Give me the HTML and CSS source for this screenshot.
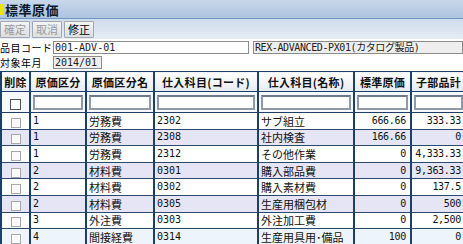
FILE: index.html
```html
<!DOCTYPE html>
<html lang="ja">
<head>
<meta charset="utf-8">
<link rel="stylesheet" href="styles.css">
</head>
<body>
<div class="titlebar"><span class="mark"></span><span class="title">標準原価</span></div>
<div class="toolbar">
  <button class="btn disabled">確定</button>
  <button class="btn disabled">取消</button>
  <button class="btn">修正</button>
</div>
<div class="form">
  <div class="frow">
    <span class="label">品目コード</span>
    <span class="field code">001-ADV-01</span>
    <span class="field name ro">REX-ADVANCED-PX01(カタログ製品)</span>
  </div>
  <div class="frow">
    <span class="label">対象年月</span>
    <span class="field ym ro">2014/01</span>
  </div>
</div>
<table class="grid">
  <colgroup>
    <col class="c1"><col class="c2"><col class="c3"><col class="c4"><col class="c5"><col class="c6"><col class="c7">
  </colgroup>
  <thead>
    <tr class="head">
      <th>削除</th><th>原価区分</th><th>原価区分名</th><th>仕入科目(コード)</th><th>仕入科目(名称)</th><th>標準原価</th><th>子部品計</th>
    </tr>
    <tr class="filter">
      <td class="chk"><span class="box dark"></span></td>
      <td><span class="fin"></span></td>
      <td><span class="fin"></span></td>
      <td><span class="fin"></span></td>
      <td><span class="fin"></span></td>
      <td><span class="fin"></span></td>
      <td><span class="fin"></span></td>
    </tr>
  </thead>
  <tbody>
    <tr><td class="chk"><span class="box"></span></td><td>1</td><td>労務費</td><td>2302</td><td>サブ組立</td><td class="num">666.66</td><td class="num">333.33</td></tr>
    <tr class="alt"><td class="chk"><span class="box"></span></td><td>1</td><td>労務費</td><td>2308</td><td>社内検査</td><td class="num">166.66</td><td class="num">0</td></tr>
    <tr><td class="chk"><span class="box"></span></td><td>1</td><td>労務費</td><td>2312</td><td>その他作業</td><td class="num">0</td><td class="num">4,333.33</td></tr>
    <tr class="alt"><td class="chk"><span class="box"></span></td><td>2</td><td>材料費</td><td>0301</td><td>購入部品費</td><td class="num">0</td><td class="num">9,363.33</td></tr>
    <tr><td class="chk"><span class="box"></span></td><td>2</td><td>材料費</td><td>0302</td><td>購入素材費</td><td class="num">0</td><td class="num">137.5</td></tr>
    <tr class="alt"><td class="chk"><span class="box"></span></td><td>2</td><td>材料費</td><td>0305</td><td>生産用梱包材</td><td class="num">0</td><td class="num">500</td></tr>
    <tr><td class="chk"><span class="box"></span></td><td>3</td><td>外注費</td><td>0303</td><td>外注加工費</td><td class="num">0</td><td class="num">2,500</td></tr>
    <tr class="hover"><td class="chk"><span class="box"></span></td><td>4</td><td>間接経費</td><td>0314</td><td>生産用具用･備品</td><td class="num">100</td><td class="num">0</td></tr>
  </tbody>
</table>
</body>
</html>
```
FILE: styles.css
```css
html, body {
  margin: 0;
  padding: 0;
  background: #ffffff;
  font-family: "Noto Sans CJK JP", "DejaVu Sans", sans-serif;
  font-size: 11px;
  color: #000;
  overflow: hidden;
}

.titlebar {
  height: 18px;
  display: flex;
  align-items: center;
  background: linear-gradient(#c9d7ea, #aec3df);
  border-bottom: 1px solid #6f97c6;
}
.mark {
  width: 3px;
  height: 11px;
  background: #f2e200;
  margin-right: 2px;
}
.title {
  font-weight: bold;
  font-size: 13px;
  color: #0c1a2c;
  letter-spacing: 0.5px;
}

.toolbar {
  height: 19px;
  display: flex;
  align-items: center;
  gap: 2px;
  padding-top: 1px;
  background: linear-gradient(#cfdbeb, #e6edf6);
}
.btn {
  height: 17px;
  width: 30px;
  padding: 0;
  margin: 0;
  font-family: inherit;
  font-size: 11px;
  line-height: 15px;
  color: #000;
  background: linear-gradient(#f4f4f4, #dedede);
  border: 1px solid #a0a8b4;
  border-radius: 1px;
}
.btn.disabled {
  color: #9a9a9a;
}

.form {
  display: flex;
  flex-direction: column;
  gap: 2px;
  padding-top: 2px;
}
.frow {
  display: flex;
  align-items: center;
  height: 13px;
}
.label {
  width: 53px;
  font-size: 10px;
  letter-spacing: 0.5px;
  white-space: nowrap;
}
.field {
  height: 11px;
  box-sizing: content-box;
  border: 1px solid #8c8c8c;
  font-family: "DejaVu Sans Mono", "Noto Sans CJK JP", monospace;
  font-size: 10px;
  line-height: 11px;
  padding: 0 1px;
  white-space: nowrap;
  overflow: hidden;
  background: #fff;
  color: #222;
}
.field.ro {
  background: #eeeeee;
}
.field.code {
  width: 192px;
}
.field.name {
  margin-left: 4px;
  flex: 1;
  letter-spacing: -0.4px;
}
.field.ym {
  width: 45px;
}

.grid {
  margin-top: 2px;
  border-collapse: collapse;
  table-layout: fixed;
  width: 465px;
}
.c1 { width: 29px; }
.c2 { width: 56px; }
.c3 { width: 68px; }
.c4 { width: 104px; }
.c5 { width: 96px; }
.c6 { width: 57px; }
.c7 { width: 55px; }

.grid th, .grid td {
  border-left: 2px solid #1d4068;
  border-right: 2px solid #1d4068;
  padding: 0 2px;
  white-space: nowrap;
  overflow: hidden;
}
.grid th {
  height: 19px;
  font-weight: bold;
  font-size: 11px;
  letter-spacing: 0.3px;
  text-align: center;
  background: linear-gradient(#ffffff, #e6ebf2);
  border-top: 1px solid #1d4068;
  border-bottom: 1px solid #1d4068;
  color: #111;
}
.grid .filter td {
  height: 20px;
  background: #f6f8fb;
  border-bottom: 1px solid #1d4068;
  padding: 0 2px;
}
.fin {
  display: block;
  height: 11px;
  border: 2px solid #8e9aa8;
  border-top-color: #6c7a8a;
  background: #fff;
}
.grid tbody td {
  height: 15.6px;
  border-bottom: 1px solid #2a4a6e;
  font-size: 11px;
  line-height: 14px;
  color: #111;
}
.grid tbody tr {
  background: #ffffff;
}
.grid tbody tr.alt {
  background: #e5e5f6;
}
.grid tbody tr.hover {
  background: #eef4fb;
}
.grid td.num {
  text-align: right;
  padding-right: 4px;
  font-family: "DejaVu Sans Mono", monospace;
  font-size: 10px;
  letter-spacing: -0.3px;
}
.grid tbody td:nth-child(2),
.grid tbody td:nth-child(4) {
  font-family: "DejaVu Sans Mono", monospace;
  font-size: 10px;
}
.grid td.chk {
  text-align: center;
}
.box {
  display: inline-block;
  width: 8px;
  height: 8px;
  border: 1px solid #a8a8a8;
  background: #fafafa;
  vertical-align: middle;
}
.box.dark {
  width: 9px;
  height: 9px;
  border-color: #555;
  background: #fff;
}
```
